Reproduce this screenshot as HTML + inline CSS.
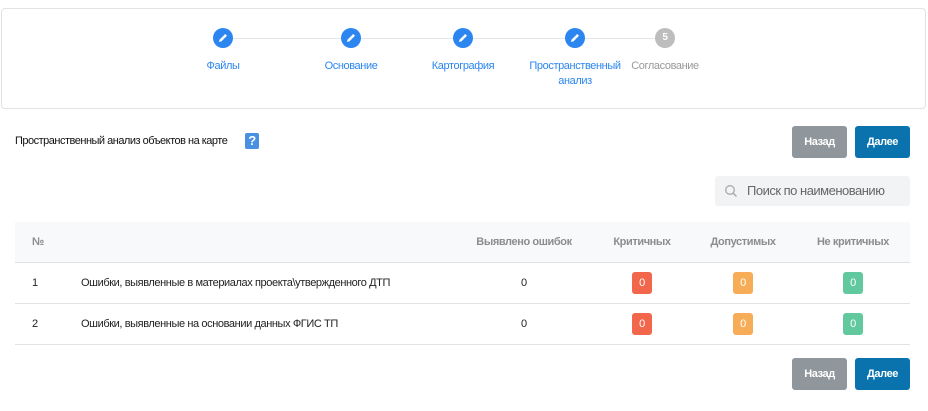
<!DOCTYPE html>
<html><head><meta charset="utf-8"><style>
*{margin:0;padding:0;box-sizing:border-box}
body{width:928px;height:411px;background:#fff;font-family:"Liberation Sans",sans-serif;font-size:11px;letter-spacing:-0.4px;color:#222;position:relative;overflow:hidden}
.a{position:absolute;white-space:nowrap}
.card{position:absolute;left:1px;top:8px;width:925px;height:101px;border:1px solid #e2e2e2;border-radius:4px}
.line{position:absolute;top:38px;height:1px;background:#e4e4e4}
.c{position:absolute;width:20px;height:20px;border-radius:50%;background:#2b86f0;top:28px}
.c svg{position:absolute;left:4px;top:4px}
.lbl{position:absolute;top:59px;color:#2b86f0;font-size:11px;text-align:center;transform:translateX(-50%);line-height:15px}
.btn{position:absolute;width:55px;height:32px;border-radius:3px;color:#fff;font-weight:bold;text-align:center;line-height:32px;font-size:11px}
.b1{background:#8f969c}.b2{background:#0a73ad}
.hd{position:absolute;left:15px;top:222px;width:895px;height:40px;background:#f8f9fb}
.sep{position:absolute;left:15px;width:895px;height:1px;background:#e2e2e2}
.th{position:absolute;top:236px;color:#8d8d8d;font-weight:bold;transform:translateX(-50%)}
.bd{position:absolute;width:20px;height:22px;border-radius:3px;color:#fff;text-align:center;line-height:22px;font-size:11px}
</style></head><body>
<div class="card"></div>
<div class="line" style="left:233px;width:108px"></div>
<div class="line" style="left:361px;width:92px"></div>
<div class="line" style="left:473px;width:92px"></div>
<div class="line" style="left:585px;width:70px"></div>
<div class="c" style="left:213px"><svg width="12" height="12" viewBox="0 0 12 12"><path d="M2 10 L2.6 7.6 L8.2 2 L10 3.8 L4.4 9.4 Z" fill="#fff"/></svg></div>
<div class="c" style="left:341px"><svg width="12" height="12" viewBox="0 0 12 12"><path d="M2 10 L2.6 7.6 L8.2 2 L10 3.8 L4.4 9.4 Z" fill="#fff"/></svg></div>
<div class="c" style="left:453px"><svg width="12" height="12" viewBox="0 0 12 12"><path d="M2 10 L2.6 7.6 L8.2 2 L10 3.8 L4.4 9.4 Z" fill="#fff"/></svg></div>
<div class="c" style="left:565px"><svg width="12" height="12" viewBox="0 0 12 12"><path d="M2 10 L2.6 7.6 L8.2 2 L10 3.8 L4.4 9.4 Z" fill="#fff"/></svg></div>
<div class="c" style="left:655px;background:#bdbdbd;color:#fff;font-weight:bold;text-align:center;line-height:20px;font-size:10px">5</div>
<div class="lbl" style="left:223px">Файлы</div>
<div class="lbl" style="left:351px">Основание</div>
<div class="lbl" style="left:463px">Картография</div>
<div class="lbl" style="left:575px">Пространственный<br>анализ</div>
<div class="lbl" style="left:665px;color:#999">Согласование</div>

<div class="a" style="left:15px;top:135px;font-size:11px;letter-spacing:-0.5px;color:#111">Пространственный анализ объектов на карте</div>
<div class="a" style="left:245px;top:133px;width:14px;height:16px;background:#4a90e2;border-radius:2px;color:#fff;font-weight:bold;text-align:center;line-height:16px;font-size:13px">?</div>
<div class="btn b1" style="left:792px;top:126px">Назад</div>
<div class="btn b2" style="left:855px;top:126px">Далее</div>

<div class="a" style="left:715px;top:176px;width:195px;height:30px;background:#f2f3f5;border-radius:3px"></div>
<svg class="a" style="left:724px;top:184px" width="14" height="14" viewBox="0 0 14 14"><circle cx="6" cy="6" r="4.3" fill="none" stroke="#aaa" stroke-width="1.3"/><path d="M9 9 L12.5 12.5" stroke="#aaa" stroke-width="1.5"/></svg>
<div class="a" style="left:747px;top:183px;color:#666;font-size:13px;letter-spacing:-0.5px">Поиск по наименованию</div>

<div class="hd"></div>
<div class="sep" style="top:262px"></div>
<div class="sep" style="top:303px"></div>
<div class="sep" style="top:344px"></div>
<div class="a" style="left:32px;top:236px;color:#8d8d8d;font-weight:bold">№</div>
<div class="th" style="left:524px">Выявлено ошибок</div>
<div class="th" style="left:642px">Критичных</div>
<div class="th" style="left:743px">Допустимых</div>
<div class="th" style="left:853px">Не критичных</div>

<div class="a" style="left:32px;top:277px">1</div>
<div class="a" style="left:81px;top:277px">Ошибки, выявленные в материалах проекта\утвержденного ДТП</div>
<div class="a" style="left:521px;top:277px">0</div>
<div class="bd" style="left:632px;top:272px;background:#f2674c">0</div>
<div class="bd" style="left:733px;top:272px;background:#f7ad57">0</div>
<div class="bd" style="left:843px;top:272px;background:#62c99e">0</div>

<div class="a" style="left:32px;top:318px">2</div>
<div class="a" style="left:81px;top:318px">Ошибки, выявленные на основании данных ФГИС ТП</div>
<div class="a" style="left:521px;top:318px">0</div>
<div class="bd" style="left:632px;top:313px;background:#f2674c">0</div>
<div class="bd" style="left:733px;top:313px;background:#f7ad57">0</div>
<div class="bd" style="left:843px;top:313px;background:#62c99e">0</div>

<div class="btn b1" style="left:792px;top:358px">Назад</div>
<div class="btn b2" style="left:855px;top:358px">Далее</div>
</body></html>
